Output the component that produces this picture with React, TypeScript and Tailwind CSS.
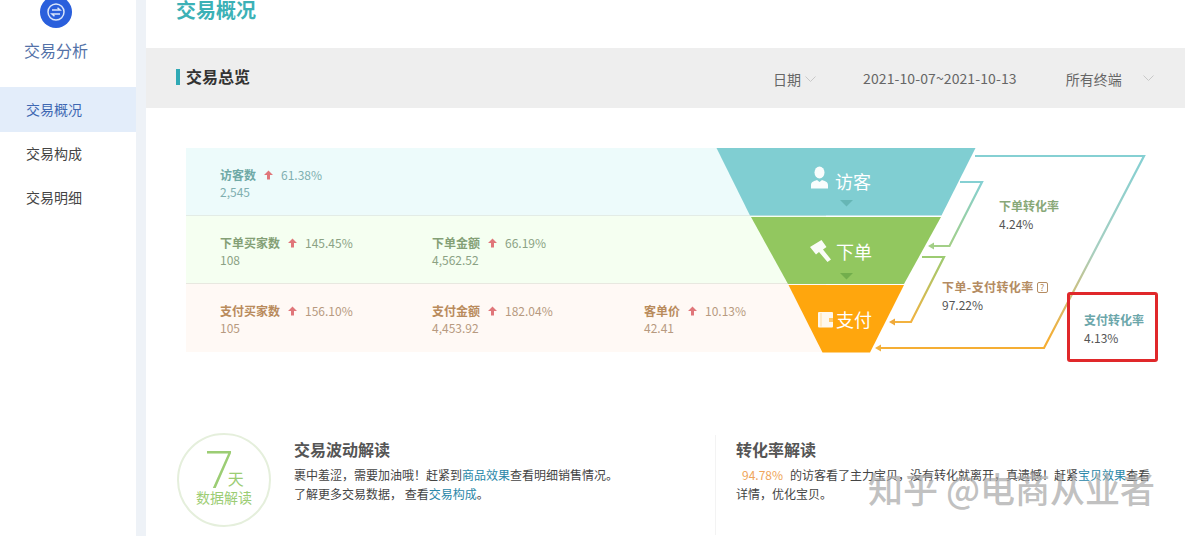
const font = "font-['Noto_Sans_CJK_SC','Noto_Sans',sans-serif]";

const UpArrow = () => (
	<svg width="9" height="10" viewBox="0 0 9 10" className="mx-[8px] shrink-0">
		<path d="M4.5 0.5 L9 5 H6 V9.5 H3 V5 H0 Z" fill="#e0767a" />
	</svg>
);

const Chevron = ({ className }: { className: string }) => (
	<svg width="11" height="6" viewBox="0 0 11 6" fill="none" stroke="#c8c8c8" className={className}>
		<path d="M0.5 0.5 L5.5 5.5 L10.5 0.5" />
	</svg>
);

type Metric = { label: string; pct: string; value: string };

const rows: { bg: string; labelColor: string; pctColor: string; border: string; metrics: Metric[] }[] = [
	{
		bg: "bg-[#edfbfb]",
		labelColor: "text-[#6fa9a6]",
		pctColor: "text-[#7fafb0]",
		border: "border-b border-[#e3ece6]",
		metrics: [{ label: "访客数", pct: "61.38%", value: "2,545" }],
	},
	{
		bg: "bg-[#f5fff1]",
		labelColor: "text-[#84a076]",
		pctColor: "text-[#8ba284]",
		border: "border-b border-[#e8e8e0]",
		metrics: [
			{ label: "下单买家数", pct: "145.45%", value: "108" },
			{ label: "下单金额", pct: "66.19%", value: "4,562.52" },
		],
	},
	{
		bg: "bg-[#fff9f5]",
		labelColor: "text-[#b98b5c]",
		pctColor: "text-[#b79a80]",
		border: "",
		metrics: [
			{ label: "支付买家数", pct: "156.10%", value: "105" },
			{ label: "支付金额", pct: "182.04%", value: "4,453.92" },
			{ label: "客单价", pct: "10.13%", value: "42.41" },
		],
	},
];

const Funnel = () => (
	<svg
		viewBox="146 108 1039 300"
		className="absolute left-0 top-0 h-[300px] w-[1039px]"
	>
		<defs>
			<linearGradient id="outer" x1="0" y1="0" x2="0" y2="1">
				<stop offset="0" stopColor="#85d0d3" />
				<stop offset="0.5" stopColor="#a8cfc0" />
				<stop offset="0.95" stopColor="#f5ae34" />
				<stop offset="1" stopColor="#f5ae34" />
			</linearGradient>
			<linearGradient id="first" x1="0" y1="0" x2="0" y2="1">
				<stop offset="0" stopColor="#85d0d3" />
				<stop offset="1" stopColor="#a3cf87" />
			</linearGradient>
			<linearGradient id="second" x1="0" y1="0" x2="0" y2="1">
				<stop offset="0" stopColor="#9ccb72" />
				<stop offset="1" stopColor="#f3b23f" />
			</linearGradient>
		</defs>
		<polygon points="716.5,148 975.5,148 941.5,215.5 750,215.5" fill="#80ced2" />
		<polygon points="751,217 941,217 904,284 788,284" fill="#92c75f" />
		<polygon points="788.5,285 904,285 870,352.5 822.5,352.5" fill="#ffa60d" />
		<polygon points="840,200 853,200 846.5,206.5" fill="#66b6b5" />
		<polygon points="840,273 853,273 846.5,279.5" fill="#72ae4c" />

		<polyline points="975,156 1144,156 1044,348 880,348" fill="none" stroke="url(#outer)" strokeWidth="2.2" />
		<polygon points="875,348 881,344.5 881,351.5" fill="#f3b23f" />
		<polyline points="960,182 982,182 949.5,246 933,246" fill="none" stroke="url(#first)" strokeWidth="2.2" />
		<polygon points="928,246 934,242.5 934,249.5" fill="#a3cf87" />
		<polyline points="922,257 944,257 911,322 894,322" fill="none" stroke="url(#second)" strokeWidth="2.2" />
		<polygon points="889,322 895,318.5 895,325.5" fill="#efa93b" />

		{/* visitor */}
		<ellipse cx="819.5" cy="172.5" rx="5" ry="6" fill="#fff" fillOpacity="0.95" />
		<path d="M811 188.5 V185 C811 182 814 181 817 180 L819.5 182 L822 180 C825 181 828 182 828 185 V188.5 Z" fill="#fff" fillOpacity="0.95" />
		{/* hammer */}
		<path d="M810 247 L821.5 240 L826.5 247 L823 249.5 L831 259.5 L827.5 262 L819 252 L816 254.5 Z" fill="#fff" fillOpacity="0.95" />
		{/* wallet */}
		<rect x="818" y="312" width="15" height="15.5" rx="1" fill="#fff" fillOpacity="0.92" />
		<rect x="820.5" y="313" width="1" height="13.5" fill="#ffa60d" fillOpacity="0.35" />
		<rect x="829" y="318" width="4" height="4" fill="#ffa60d" fillOpacity="0.6" />
	</svg>
);

const StageName = ({ className, children }: { className: string; children: string }) => (
	<span className={`absolute text-[18px] leading-[24px] text-white ${className}`}>
		{children}
	</span>
);

export default function App() {
	return (
		<div className={`flex h-[536px] w-[1185px] overflow-hidden bg-white ${font}`}>
			<aside className="w-[136px] shrink-0">
				<div className="flex flex-col">
					<div className="-mt-[4px] ml-[40px] flex h-8 w-8 items-center justify-center rounded-full bg-[#2a5fdc]">
						<svg width="20" height="20" viewBox="0 0 20 20" fill="none" stroke="#dbe6fb" strokeWidth="1.5">
							<circle cx="10" cy="10" r="8" />
							<path d="M6 8 H14 L11.5 5.8" />
							<path d="M14 12 H6 L8.5 14.2" />
						</svg>
					</div>
					<div className="mt-[10px] pl-[24px] text-[16px] leading-[24px] text-[#5472a8]">
						交易分析
					</div>
				</div>
				<nav className="mt-[25px] text-[14px] text-[#444]">
					<div className="flex h-[45px] items-center bg-[#e3edfa] pl-[26px] text-[#3f68b2]">交易概况</div>
					<div className="flex h-[44px] items-center pb-[2px] pl-[26px]">交易构成</div>
					<div className="flex h-[44px] items-center pb-[2px] pl-[26px]">交易明细</div>
				</nav>
			</aside>
			<div className="w-[10px] shrink-0 bg-[#eef2f7]" />
			<main className="min-w-0 flex-1">
				<div className="flex h-[48px] items-start pl-[30px]">
					<h1 className="-mt-[4px] text-[20px] font-bold leading-[28px] text-[#3cb1b6]">交易概况</h1>
				</div>
				<div className="flex h-[60px] items-center bg-[#eeeeee] pl-[30px] text-[14px] text-[#666]">
					<div className="-mt-[2px] h-4 w-1 bg-[#2fa9b5]" />
					<h2 className="mb-[4px] ml-[6px] text-[16px] font-bold text-[#333]">交易总览</h2>
					<span className="ml-[523px] mt-[3px]">日期</span>
					<Chevron className="ml-[4px] mt-[2px]" />
					<span className="ml-[47px] mt-[1px] tracking-[0.1px]">2021-10-07~2021-10-13</span>
					<span className="ml-[49px] mt-[2px]">所有终端</span>
					<Chevron className="ml-[21px]" />
				</div>

				<section className="relative">
					<div className="ml-[40px] w-[640px] pt-[40px]">
						{rows.map((row) => (
							<div key={row.metrics[0].label} className={`flex h-[68px] pl-[34px] pt-[18px] ${row.bg} ${row.border}`}>
								{row.metrics.map((m) => (
									<div key={m.label} className="w-[212px] shrink-0 text-[12px] leading-[17px]">
										<div className="flex items-center">
											<span className={`font-bold ${row.labelColor}`}>{m.label}</span>
											<UpArrow />
											<span className={row.pctColor}>{m.pct}</span>
										</div>
										<div className={row.pctColor}>{m.value}</div>
									</div>
								))}
							</div>
						))}
					</div>

					<Funnel />
					<StageName className="left-[689px] top-[61px]">访客</StageName>
					<StageName className="left-[690px] top-[131px]">下单</StageName>
					<StageName className="left-[690px] top-[199px]">支付</StageName>

					<div className="absolute left-[853px] top-[89px] text-[12px] leading-[18px]">
						<div className="font-bold text-[#88a878]">下单转化率</div>
						<div className="text-[#555]">4.24%</div>
					</div>
					<div className="absolute left-[796px] top-[170px] text-[12px] leading-[18px]">
						<div className="flex items-center font-bold tracking-[0.4px] text-[#b48c62]">
							下单-支付转化率
							<span className="ml-[3px] flex h-[11px] w-[11px] items-center justify-center rounded-[2px] border border-[#b48c62] text-[9px] font-normal leading-none tracking-normal">?</span>
						</div>
						<div className="text-[#555]">97.22%</div>
					</div>
					<div className="absolute left-[921px] top-[184px] h-[70px] w-[91px] rounded-[3px] border-[3px] border-[#e0282a] pl-[14px] pt-[16px] text-[12px] leading-[18px]">
						<div className="font-bold text-[#6ba6aa]">支付转化率</div>
						<div className="text-[#555]">4.13%</div>
					</div>

					<div className="ml-[31px] mt-[81px] flex">
						<div className="flex h-[94px] w-[94px] shrink-0 flex-col items-center rounded-full border-2 border-[#e5efdc] text-[#9ccd74]">
							<div className="flex h-[50px] items-end">
								<span className="font-['Open_Sans'] text-[52px] font-light leading-[34px]">7</span>
								<span className="-ml-[6px] text-[16px] leading-[14px]">天</span>
							</div>
							<div className="mt-[2px] text-[14px] leading-[20px]">数据解读</div>
						</div>
						<div className="ml-[23px] pt-[4px] text-[12px] leading-[19px] text-[#444]">
							<h3 className="text-[16px] font-bold leading-[24px] text-[#555]">交易波动解读</h3>
							<p className="mt-[4px]">
								裹中羞涩，需要加油哦！赶紧到<span className="text-[#2a87a8]">商品效果</span>查看明细销售情况。
							</p>
							<p>
								了解更多交易数据， 查看<span className="text-[#2a87a8]">交易构成</span>。
							</p>
						</div>
						<div className="ml-[97px] mt-[2px] h-[100px] w-px bg-[#f3f3f3]" />
						<div className="ml-[20px] pt-[4px] text-[12px] leading-[19px] text-[#444]">
							<h3 className="text-[16px] font-bold leading-[24px] text-[#555]">转化率解读</h3>
							<p className="mt-[4px] whitespace-nowrap pl-[6px]">
								<span className="mr-[7px] text-[#efa55a]">94.78%</span>
								的访客看了主力宝贝，没有转化就离开，真遗憾！赶紧<span className="text-[#2a87a8]">宝贝效果</span>查看
							</p>
							<p>详情，优化宝贝。</p>
						</div>
					</div>

					<div className="absolute left-[722px] top-[357px] whitespace-nowrap text-[35px] font-medium leading-[46px] text-[#a6a6a6]/70">
						知乎 @电商从业者
					</div>
				</section>
			</main>
		</div>
	);
}
